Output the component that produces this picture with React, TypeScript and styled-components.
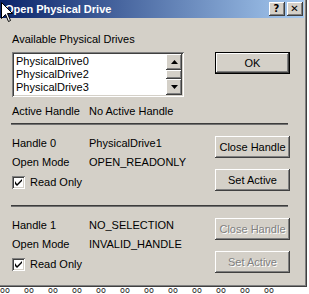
import React from "react";
import styled, { createGlobalStyle, css } from "styled-components";

const GlobalStyle = createGlobalStyle`
  html, body { margin: 0; padding: 0; background: #fff; }
  body { font-family: "Liberation Sans", Arial, sans-serif; font-size: 11px; color: #000; }
  * { box-sizing: border-box; }
`;

const raised = css`
  background: #d4d0c8;
  box-shadow: inset -1px -1px #404040, inset 1px 1px #ffffff, inset -2px -2px #808080, inset 2px 2px #d4d0c8;
`;

const sunken = css`
  box-shadow: inset 1px 1px #808080, inset -1px -1px #ffffff, inset 2px 2px #404040, inset -2px -2px #d4d0c8;
`;

const Page = styled.div`
  position: relative;
  width: 309px;
  height: 294px;
  overflow: hidden;
  background: #fff;
`;

const Window = styled.div`
  width: 307px;
  height: 287px;
  padding: 0 3px 3px 0;
  background: #d4d0c8;
  box-shadow: inset -1px -1px #404040, inset -2px -2px #808080;
  display: flex;
  flex-direction: column;
`;

const TitleBar = styled.div`
  height: 18px;
  flex: none;
  display: flex;
  align-items: center;
  justify-content: space-between;
  padding: 0 1px 0 5px;
  background: linear-gradient(to right, #0a246a, #a6caf0);
`;

const Title = styled.span`
  color: #fff;
  font-weight: bold;
  font-size: 11px;
  line-height: 13px;
`;

const TitleButtons = styled.div`
  display: flex;
  gap: 2px;
`;

const TitleButton = styled.div`
  ${raised};
  width: 16px;
  height: 14px;
  display: flex;
  align-items: center;
  justify-content: center;
  font-family: "DejaVu Sans", sans-serif;
  font-weight: bold;
  font-size: 10px;
  line-height: 10px;
  padding: 0 1px 1px 0;
`;

const Body = styled.div`
  flex: 1;
  display: flex;
  flex-direction: column;
  padding: 15px 14px 0 12px;
  line-height: 13px;
`;

const TopRow = styled.div`
  display: flex;
  justify-content: space-between;
  align-items: flex-start;
`;

const DrivesColumn = styled.div`
  display: flex;
  flex-direction: column;
  gap: 6px;
`;

const ListBox = styled.div`
  ${sunken};
  width: 172px;
  height: 45px;
  padding: 2px;
  display: flex;
  background: #fff;
`;

const ListItems = styled.div`
  flex: 1;
  overflow: hidden;
  padding: 1px 0 0 2px;
  line-height: 13px;
  white-space: nowrap;
`;

const ScrollBar = styled.div`
  width: 16px;
  display: flex;
  flex-direction: column;
  background: #e8e6e0;
`;

const ScrollButton = styled.div`
  ${raised};
  height: 16px;
  flex: none;
  display: flex;
  align-items: center;
  justify-content: center;
`;

const Thumb = styled.div`
  ${raised};
  flex: 1;
`;

const Button = styled.div<{ $default?: boolean; $disabled?: boolean }>`
  ${raised};
  width: 75px;
  height: 22px;
  display: flex;
  align-items: center;
  justify-content: center;
  line-height: 13px;
  color: ${(p) => (p.$disabled ? "#808080" : "#000")};
  text-shadow: ${(p) => (p.$disabled ? "1px 1px #ffffff" : "none")};
  ${(p) =>
    p.$default &&
    css`
      box-shadow: inset 0 0 0 1px #000, inset -2px -2px #404040, inset 2px 2px #ffffff,
        inset -3px -3px #808080;
    `}
`;

const OkButton = styled(Button)`
  margin-top: 19px;
`;

const InfoGrid = styled.div<{ $top: number }>`
  display: grid;
  grid-template-columns: 77px auto;
  row-gap: 6px;
  margin-top: ${(p) => p.$top}px;
  align-content: start;
`;

const Separator = styled.div`
  height: 2px;
  margin: 5px 2px 0 -1px;
  background: #3c3c3c;
  border-bottom: 1px solid #707070;
`;

const HandleSection = styled.div`
  display: flex;
  justify-content: space-between;
  padding: 11px 0 9px 0;
`;

const ButtonColumn = styled.div`
  display: flex;
  flex-direction: column;
  gap: 11px;
`;

const CheckRow = styled.label`
  grid-column: 1 / span 2;
  display: flex;
  align-items: center;
  gap: 5px;
  margin-top: 1px;
  height: 13px;
`;

const CheckBox = styled.span`
  ${sunken};
  width: 13px;
  height: 13px;
  background: #fff;
  display: flex;
  align-items: center;
  justify-content: center;
`;

const BehindStrip = styled.div`
  display: flex;
  height: 7px;
  overflow: hidden;
  font-family: "DejaVu Sans", sans-serif;
  font-size: 8px;
  line-height: 7px;
  color: #1a1a1a;
`;

const BehindItem = styled.span`
  width: 24px;
  flex: none;
`;

const Cursor = styled.svg`
  position: absolute;
  left: 1px;
  top: 2px;
`;

const Arrow = ({ up }: { up?: boolean }) => (
  <svg width="7" height="4" viewBox="0 0 7 4">
    <path d={up ? "M3.5 0 L7 4 L0 4 Z" : "M0 0 L7 0 L3.5 4 Z"} fill="#000" />
  </svg>
);

const Check = () => (
  <svg width="7" height="7" viewBox="0 0 7 7">
    <path d="M0 2 L0 5 L2 7 L7 2 L7 0 L2 5 Z" fill="#000" />
  </svg>
);

const drives = ["PhysicalDrive0", "PhysicalDrive2", "PhysicalDrive3", "PhysicalDrive4"];

type Handle = { name: string; value: string; mode: string; disabled: boolean };
const handles: Handle[] = [
  { name: "Handle 0", value: "PhysicalDrive1", mode: "OPEN_READONLY", disabled: false },
  { name: "Handle 1", value: "NO_SELECTION", mode: "INVALID_HANDLE", disabled: true },
];

export default function App() {
  return (
    <Page>
      <GlobalStyle />
      <Window>
        <TitleBar>
          <Title>Open Physical Drive</Title>
          <TitleButtons>
            <TitleButton>?</TitleButton>
            <TitleButton>✕</TitleButton>
          </TitleButtons>
        </TitleBar>
        <Body>
          <TopRow>
            <DrivesColumn>
              <span>Available Physical Drives</span>
              <ListBox>
                <ListItems>
                  {drives.map((d) => (
                    <div key={d}>{d}</div>
                  ))}
                </ListItems>
                <ScrollBar>
                  <ScrollButton>
                    <Arrow up />
                  </ScrollButton>
                  <Thumb />
                  <ScrollButton>
                    <Arrow />
                  </ScrollButton>
                </ScrollBar>
              </ListBox>
            </DrivesColumn>
            <OkButton $default>OK</OkButton>
          </TopRow>
          <InfoGrid $top={8}>
            <span>Active Handle</span>
            <span>No Active Handle</span>
          </InfoGrid>
          {handles.map((h) => (
            <React.Fragment key={h.name}>
              <Separator />
              <HandleSection>
                <InfoGrid $top={1}>
                  <span>{h.name}</span>
                  <span>{h.value}</span>
                  <span>Open Mode</span>
                  <span>{h.mode}</span>
                  <CheckRow>
                    <CheckBox>
                      <Check />
                    </CheckBox>
                    Read Only
                  </CheckRow>
                </InfoGrid>
                <ButtonColumn>
                  <Button $disabled={h.disabled}>Close Handle</Button>
                  <Button $disabled={h.disabled}>Set Active</Button>
                </ButtonColumn>
              </HandleSection>
            </React.Fragment>
          ))}
        </Body>
      </Window>
      <BehindStrip>
        {Array.from({ length: 13 }).map((_, i) => (
          <BehindItem key={i}>{i < 12 ? "oo" : ""}</BehindItem>
        ))}
      </BehindStrip>
      <Cursor width="12" height="20" viewBox="0 0 12 20">
        <path d="M0.5 0.5 L0.5 16.5 L4.5 12.5 L7.5 19.5 L9.5 18.5 L6.5 11.5 L11.5 11.5 Z" fill="#fff" stroke="#000" strokeWidth="1" />
      </Cursor>
    </Page>
  );
}
